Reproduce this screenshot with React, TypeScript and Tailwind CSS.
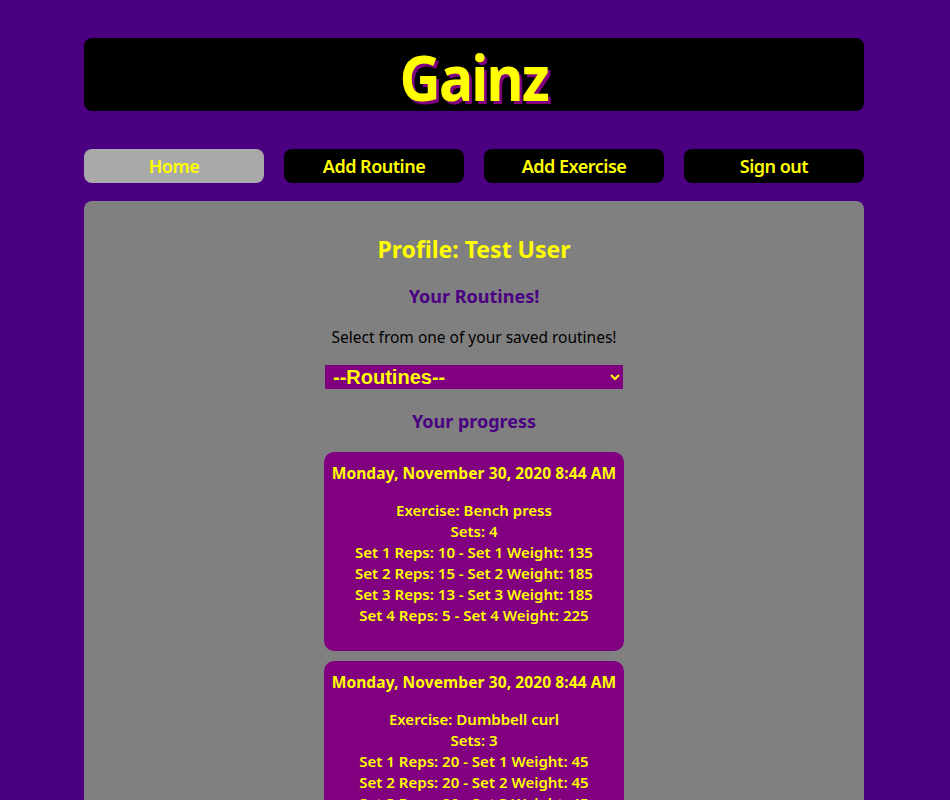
import React from 'react';

interface Entry {
  date: string;
  exercise: string;
  sets: { reps: number; weight: number }[];
}

const entries: Entry[] = [
  {
    date: 'Monday, November 30, 2020 8:44 AM',
    exercise: 'Bench press',
    sets: [
      { reps: 10, weight: 135 },
      { reps: 15, weight: 185 },
      { reps: 13, weight: 185 },
      { reps: 5, weight: 225 },
    ],
  },
  {
    date: 'Monday, November 30, 2020 8:44 AM',
    exercise: 'Dumbbell curl',
    sets: [
      { reps: 20, weight: 45 },
      { reps: 20, weight: 45 },
      { reps: 20, weight: 45 },
    ],
  },
];

const navItems = ['Home', 'Add Routine', 'Add Exercise', 'Sign out'];

const App: React.FC = () => {
  return (
    <div className="min-h-screen bg-[#4b0082] pt-[38px] font-['Noto_Sans',sans-serif]">
      <div className="w-[780px] ml-[84px]">
        <header className="bg-black rounded-lg h-[73px] flex items-center justify-center">
          <h1 className="text-[62px] font-bold leading-none text-[#ffff00] tracking-[-2px] [text-shadow:3px_3px_0_#800080] scale-x-[0.92] translate-y-[2px]">
            Gainz
          </h1>
        </header>

        <nav className="grid grid-cols-4 gap-5 mt-[38px]">
          {navItems.map((item, i) => (
            <button
              key={item}
              className={`h-[34px] rounded-lg text-[18px] font-semibold text-[#ffff00] tracking-[-0.5px] ${
                i === 0 ? 'bg-[#a9a9a9]' : 'bg-black'
              }`}
            >
              {item}
            </button>
          ))}
        </nav>

        <main className="bg-[#808080] rounded-lg mt-[18px] pt-[33px] pb-4 flex flex-col items-center">
          <h2 className="text-[23px] font-bold text-[#ffff00] leading-[30px]">Profile: Test User</h2>
          <h3 className="text-[18px] font-bold text-[#4b0082] mt-[20px] leading-6">Your Routines!</h3>
          <p className="text-[15.5px] text-black mt-[19px] leading-5">Select from one of your saved routines!</p>
          <select className="mt-[18px] w-[298px] h-6 bg-[#800080] text-[#ffff00] font-['Liberation_Sans',sans-serif] font-bold text-[20px] leading-6 pl-1">
            <option>--Routines--</option>
          </select>
          <h3 className="text-[18px] font-bold text-[#4b0082] mt-[20px] leading-6">Your progress</h3>

          <div className="mt-[19px] flex flex-col gap-[10px]">
            {entries.map((e, idx) => (
              <div key={idx} className="w-[300px] bg-[#800080] rounded-[10px] pt-[11px] pb-[25px] text-center text-[#ffff00] text-[15px] font-semibold leading-[21px]">
                <h4 className="font-bold text-[15.5px] tracking-[0.1px]">{e.date}</h4>
                <div className="mt-[16px]">
                  <p>Exercise: {e.exercise}</p>
                  <p>Sets: {e.sets.length}</p>
                  {e.sets.map((s, i) => (
                    <p key={i}>
                      Set {i + 1} Reps: {s.reps} - Set {i + 1} Weight: {s.weight}
                    </p>
                  ))}
                </div>
              </div>
            ))}
          </div>
        </main>
      </div>
    </div>
  );
};

export default App;
